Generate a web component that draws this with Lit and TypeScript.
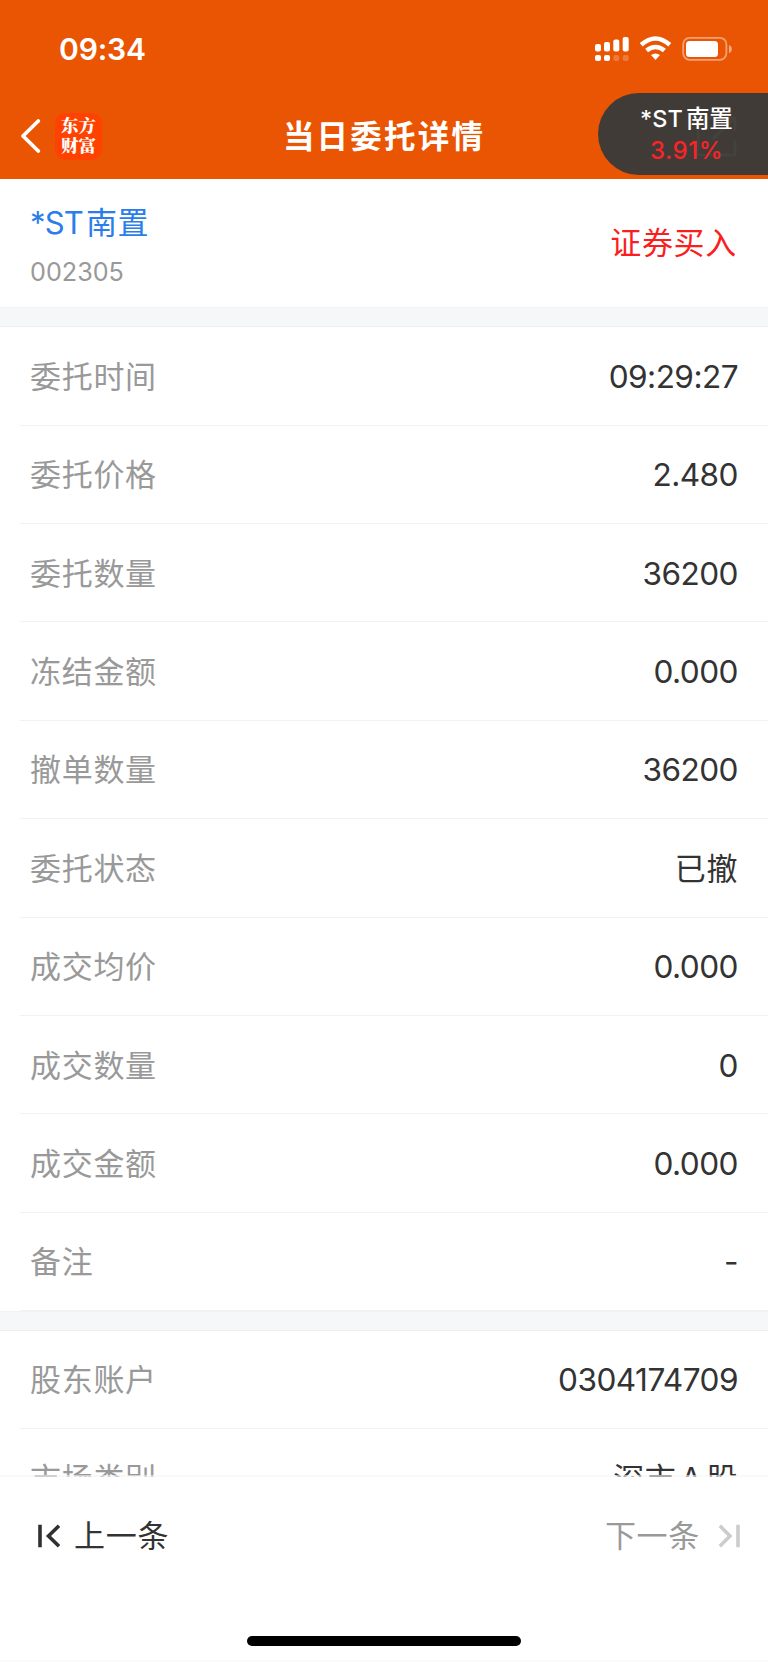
import { LitElement, html, css } from "lit";
import { customElement, property } from "lit/decorators.js";

type Row = [label: string, value: string];

const ORDER_ROWS: Row[] = [
  ["委托时间", "09:29:27"],
  ["委托价格", "2.480"],
  ["委托数量", "36200"],
  ["冻结金额", "0.000"],
  ["撤单数量", "36200"],
  ["委托状态", "已撤"],
  ["成交均价", "0.000"],
  ["成交数量", "0"],
  ["成交金额", "0.000"],
  ["备注", "-"],
];

const ACCOUNT_ROWS: Row[] = [
  ["股东账户", "0304174709"],
  ["市场类别", "深市A股"],
];

@customElement("detail-row")
class DetailRow extends LitElement {
  @property() label = "";
  @property() value = "";

  static styles = css`
    :host {
      display: block;
      box-sizing: border-box;
      height: 98.38px;
      padding-left: 20px;
    }
    .row {
      box-sizing: border-box;
      height: 100%;
      display: flex;
      justify-content: space-between;
      align-items: center;
      padding: 2px 30px 0 10px;
      border-bottom: 1px solid #f1f2f3;
      line-height: 40px;
    }
    .label {
      font-size: 31px;
      letter-spacing: 0.7px;
      color: #999;
    }
    .value {
      font-size: 31.6px;
      letter-spacing: -0.55px;
      color: #333;
    }
    .cjk {
      font-size: 31px;
      letter-spacing: 0.6px;
    }
    .latin {
      margin: 0 4px;
    }
  `;

  render() {
    const cjk = /[\u4e00-\u9fff]/.test(this.value);
    const parts = this.value.split(/([A-Z]+)/);
    return html`<div class="row">
      <span class="label">${this.label}</span>
      <span class="value ${cjk ? "cjk" : ""}">${parts.map((part, i) =>
        i % 2 ? html`<span class="latin">${part}</span>` : part
      )}</span>
    </div>`;
  }
}

@customElement("status-icons")
class StatusIcons extends LitElement {
  static styles = css`
    :host { display: block; height: 28px; }
    svg { display: block; }
  `;
  render() {
    return html`<svg width="140" height="28" viewBox="0 0 140 28" fill="#fff">
      <rect x="0" y="9" width="6" height="7.5" rx="2" />
      <rect x="9" y="7" width="6" height="9.5" rx="2" />
      <rect x="18.3" y="4.5" width="6" height="12" rx="2" />
      <rect x="27.7" y="2" width="6" height="14.5" rx="2" />
      <rect x="0" y="20" width="6" height="6" rx="2" />
      <rect x="9" y="20" width="6" height="6" rx="2" />
      <rect x="18.3" y="20" width="6" height="6" rx="2" opacity=".22" />
      <rect x="27.7" y="20" width="6" height="6" rx="2" opacity=".22" />
      <g fill="none" stroke="#fff" stroke-width="4.5">
        <path d="M46.2 9.8Q60.5-2.8 74.8 9.8" />
        <path d="M51.6 15.5Q60.5 8.4 69.4 15.5" />
      </g>
      <path d="M56 20Q60.5 16.8 65 20L60.5 25Z" />
      <rect x="88.2" y="2.8" width="43.2" height="22" rx="6.5" fill="none" stroke="#fff" stroke-opacity=".45" stroke-width="1.8" />
      <rect x="91" y="6" width="32" height="16" rx="3.5" />
      <path d="M134 10Q136.8 11 136.8 14T134 18Z" opacity=".5" />
    </svg>`;
  }
}

@customElement("app-root")
class AppRoot extends LitElement {
  static styles = css`
    :host {
      display: flex;
      flex-direction: column;
      width: 768px;
      height: 1663px;
      overflow: hidden;
      position: relative;
      background: #fff;
      font-family: Inter, "Noto Sans CJK SC", sans-serif;
      color: #333;
    }
    .header {
      flex: none;
      height: 179.4px;
      background: #ea5504;
      color: #fff;
    }
    .status {
      display: flex;
      justify-content: space-between;
      align-items: center;
      height: 98px;
      box-sizing: border-box;
      padding: 0 33px 0 59px;
    }
    .clock {
      font-size: 30px;
      font-weight: 600;
      letter-spacing: -0.15px;
      line-height: 40px;
    }
    .nav {
      display: grid;
      grid-template-columns: 1fr auto 1fr;
      align-items: center;
      height: 76px;
    }
    .left {
      display: flex;
      align-items: center;
      gap: 13px;
      padding-left: 20px;
    }
    .logo {
      width: 47px;
      height: 47px;
      box-sizing: border-box;
      padding-top: 2.5px;
      border-radius: 10px;
      background: #ff4200;
      font-family: "Noto Serif CJK SC", "Noto Sans CJK SC", serif;
      font-size: 17.5px;
      font-weight: 900;
      line-height: 19.5px;
      text-align: center;
    }
    .title {
      padding-top: 2px;
      font-size: 31.5px;
      font-weight: 600;
      letter-spacing: 2.2px;
      line-height: 44px;
    }
    .float {
      position: absolute;
      top: 93px;
      right: 0;
      width: 170px;
      height: 82px;
      box-sizing: border-box;
      padding: 10px 0 0 7px;
      border-radius: 41px 0 0 41px;
      background: #413b37;
      text-align: center;
      color: #fff;
    }
    .share {
      position: absolute;
      left: 97px;
      top: 22px;
    }
    .float-name {
      position: relative;
      display: flex;
      justify-content: center;
      gap: 3px;
      font-size: 23.5px;
      font-weight: 500;
      line-height: 32px;
    }
    .float-pct {
      position: relative;
      font-size: 24px;
      line-height: 32px;
      letter-spacing: 0.5px;
      font-weight: 500;
      color: #fa2327;
    }
    .summary {
      flex: none;
      height: 127.6px;
      box-sizing: border-box;
      display: flex;
      justify-content: space-between;
      padding: 22px 31px 0 30px;
    }
    .name {
      display: flex;
      gap: 3px;
      font-size: 31px;
      line-height: 44px;
      letter-spacing: 0.5px;
      color: #2b7de9;
    }
    .name-latin {
      letter-spacing: -0.8px;
    }
    .code {
      margin-top: 10px;
      font-size: 25.2px;
      line-height: 34px;
      color: #999;
    }
    .side {
      padding-top: 20px;
      font-size: 31px;
      line-height: 44px;
      letter-spacing: 0.7px;
      color: #fa1e1e;
    }
    .gap {
      flex: none;
      box-sizing: border-box;
      height: 20.3px;
      background: #f6f7f9;
      border-top: 1px solid #f1f2f3;
      border-bottom: 1px solid #eeefef;
    }
    .gap.second {
      height: 19.5px;
    }
    .list {
      flex: none;
    }
    .account {
      height: 146.4px;
      overflow: hidden;
    }
    .footer {
      flex: 1;
      margin-top: -2px;
      position: relative;
      border-top: 2px solid rgba(245, 245, 245, 0.6);
      background: #fff;
      background-clip: padding-box;
      display: flex;
      flex-direction: column;
      justify-content: space-between;
    }
    .pager {
      display: flex;
      justify-content: space-between;
      padding: 37px 26px 0 36px;
      font-size: 31px;
      line-height: 44px;
      letter-spacing: 0.7px;
    }
    .prev,
    .next {
      display: flex;
      align-items: center;
    }
    .prev { gap: 14px; }
    .next { gap: 18px; color: #999; }
    .bottom {
      display: flex;
      justify-content: center;
      padding-bottom: 14px;
      margin-bottom: 1px;
      border-bottom: 2px solid #fafafa;
    }
    .home {
      width: 274px;
      height: 10px;
      border-radius: 5px;
      background: #000;
    }
  `;

  private rows(rows: Row[]) {
    return rows.map(
      ([label, value]) => html`<detail-row .label=${label} .value=${value}></detail-row>`
    );
  }

  render() {
    return html`
      <div class="header">
        <div class="status">
          <span class="clock">09:34</span>
          <status-icons></status-icons>
        </div>
        <div class="nav">
          <div class="left">
            <svg width="22" height="36" viewBox="0 0 22 36" fill="none" stroke="#fff" stroke-width="3.8" stroke-linecap="round" stroke-linejoin="round">
              <path d="M18.3 3L3 18L18.3 33" />
            </svg>
            <div class="logo">东方<br />财富</div>
          </div>
          <span class="title">当日委托详情</span>
          <span></span>
        </div>
      </div>
      <div class="float">
        <svg class="share" width="44" height="44" viewBox="0 0 44 44" fill="none" stroke="#42423f" stroke-width="3">
          <path d="M20 3H3V40H40V25M25 3H40V16M39 4L18 24" />
        </svg>
        <div class="float-name"><span>*ST</span><span>南置</span></div>
        <div class="float-pct">3.91%</div>
      </div>
      <div class="summary">
        <div>
          <div class="name"><span class="name-latin">*ST</span><span>南置</span></div>
          <div class="code">002305</div>
        </div>
        <div class="side">证券买入</div>
      </div>
      <div class="gap"></div>
      <div class="list">${this.rows(ORDER_ROWS)}</div>
      <div class="gap second"></div>
      <div class="list account">${this.rows(ACCOUNT_ROWS)}</div>
      <div class="footer">
        <div class="pager">
          <div class="prev">
            <svg width="24" height="24" viewBox="0 0 24 24" fill="none" stroke="#303030" stroke-width="3.6">
              <path d="M4 .7V23.3M23 1.8L12.5 12L23 22.2" />
            </svg>
            <span>上一条</span>
          </div>
          <div class="next">
            <span>下一条</span>
            <svg width="24" height="24" viewBox="0 0 24 24" fill="none" stroke="#ccc" stroke-width="3.6">
              <path d="M20 .7V23.3M1.8 1.8L12 12L1.8 22.2" />
            </svg>
          </div>
        </div>
        <div class="bottom"><div class="home"></div></div>
      </div>
    `;
  }
}
